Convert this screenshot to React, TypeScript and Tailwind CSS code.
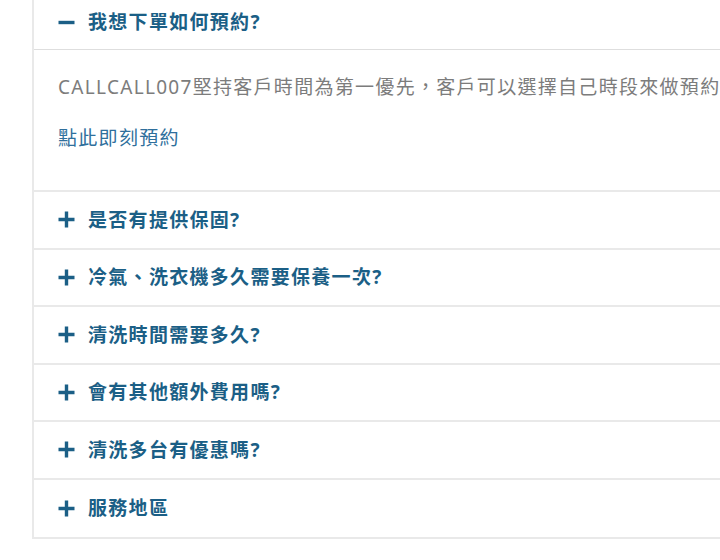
const FONT = {
  fontFamily: '"Noto Sans", "Noto Sans CJK TC", sans-serif',
};

const QUESTIONS = [
  "是否有提供保固?",
  "冷氣、洗衣機多久需要保養一次?",
  "清洗時間需要多久?",
  "會有其他額外費用嗎?",
  "清洗多台有優惠嗎?",
  "服務地區",
];

function PlusIcon() {
  return (
    <svg width="17" height="17" viewBox="0 0 17 17" className="shrink-0">
      <path d="M8.5 0.5v16M0.5 8.5h16" stroke="#1b5f86" strokeWidth="3.4" />
    </svg>
  );
}

function MinusIcon() {
  return (
    <svg width="17" height="17" viewBox="0 0 17 17" className="shrink-0">
      <path d="M0.5 8.5h16" stroke="#1b5f86" strokeWidth="3.4" />
    </svg>
  );
}

export default function App() {
  return (
    <div className="h-[560px] w-[720px] overflow-hidden bg-white" style={FONT}>
      <div className="ml-[32px] w-[760px] border-b-2 border-l-2 border-[#e9e9e9]">
        <div className="flex h-[50px] items-center gap-[13px] border-b border-[#dedede] pb-[5px] pl-[24px]">
          <MinusIcon />
          <span className="text-[19px] font-bold tracking-[1.3px] text-[#1b5f86]">我想下單如何預約?</span>
        </div>
        <div className="border-b-2 border-[#e9e9e9] pb-[37px] pl-[24px] pt-[22px]">
          <p className="text-[19px] leading-[30px] tracking-[1.3px] text-[#7c7c7c]">
            CALLCALL007堅持客戶時間為第一優先，客戶可以選擇自己時段來做預約
          </p>
          <p className="mt-[21px] text-[19px] leading-[30px] tracking-[1.3px] text-[#2f6f9c]">點此即刻預約</p>
        </div>
        {QUESTIONS.map((q, i) => (
          <div
            key={q}
            className={
              "flex h-[57.5px] items-center gap-[13px] pl-[24px]" +
              (i < QUESTIONS.length - 1 ? " border-b-2 border-[#e9e9e9]" : "")
            }
          >
            <PlusIcon />
            <span className="text-[19px] font-bold tracking-[1.3px] text-[#1b5f86]">{q}</span>
          </div>
        ))}
      </div>
    </div>
  );
}
